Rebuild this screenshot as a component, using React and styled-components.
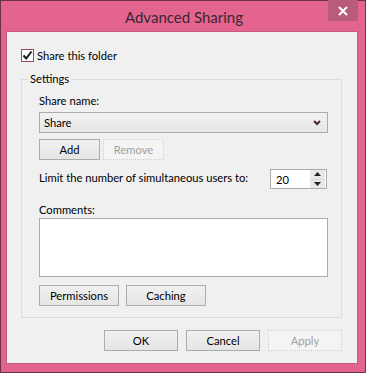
import React from "react";
import styled, { createGlobalStyle } from "styled-components";

const Global = createGlobalStyle`
  html, body { margin: 0; padding: 0; background: #fff; }
  body { font-family: Lato, "Noto Sans", sans-serif; }
  * { box-sizing: border-box; }
`;

const Frame = styled.div`
  width: 366px;
  height: 373px;
  background: #e3658f;
  border: 1px solid #6b3148;
  display: flex;
  flex-direction: column;
`;

const TitleBar = styled.div`
  height: 30px;
  display: flex;
  align-items: flex-start;
  position: relative;
`;

const Title = styled.div`
  flex: 1;
  text-align: center;
  font-size: 15px;
  color: #3a2630;
  line-height: 32px;
  padding-left: 2px;
`;

const Close = styled.div`
  position: absolute;
  right: 7px;
  top: -1px;
  width: 30px;
  height: 21px;
  background: #b85c79;
  display: flex;
  align-items: center;
  justify-content: center;
`;

const Client = styled.div`
  margin: 0 7px 0 5px;
  height: 333px;
  background: #f0f0f0;
  border: 1px solid #c75a80;
  padding: 16px 15px 0 14px;
  display: flex;
  flex-direction: column;
  font-size: 11.2px;
  color: #000;
  white-space: nowrap;
`;

const CheckRow = styled.label`
  display: flex;
  align-items: center;
  gap: 3px;
  height: 14px;
`;

const Box = styled.span`
  width: 13px;
  height: 13px;
  border: 1px solid #9b4866;
  background: #fff;
  display: flex;
  align-items: center;
  justify-content: center;
`;

const Group = styled.div`
  position: relative;
  margin-top: 17px;
  width: 321px;
  height: 239px;
  border: 1px solid #dcdcdc;
  padding: 13px 14px 0 17px;
  display: flex;
  flex-direction: column;
`;

const Legend = styled.span`
  position: absolute;
  top: -9px;
  left: 6px;
  padding: 0 2px;
  background: #f0f0f0;
  line-height: 16px;
`;

const Label = styled.div`
  line-height: 16px;
  height: 16px;
  margin-top: ${(p) => p.$mt || 0}px;
`;

const Select = styled.div`
  margin-top: 3px;
  height: 21px;
  width: 289px;
  border: 1px solid #acacac;
  background: linear-gradient(#f2f2f2, #e6e6e6);
  display: flex;
  align-items: center;
  padding: 0 6px 0 4px;
  justify-content: space-between;
`;

const Row = styled.div`
  display: flex;
  align-items: center;
  gap: ${(p) => p.$gap || 0}px;
  margin-top: ${(p) => p.$mt || 0}px;
  justify-content: ${(p) => p.$justify || "flex-start"};
`;

const RowText = styled.span`
  margin-bottom: 3px;
`;

const Button = styled.div`
  width: ${(p) => p.$w || 61}px;
  height: 21px;
  border: 1px ${(p) => (p.$disabled ? "dotted #cfcfcf" : "solid #acacac")};
  background: ${(p) => (p.$disabled ? "#f4f4f4" : "linear-gradient(#f0f0f0, #e5e5e5)")};
  color: ${(p) => (p.$disabled ? "#a0a0a0" : "#000")};
  display: flex;
  align-items: center;
  justify-content: center;
`;

const Spin = styled.div`
  width: 57px;
  height: 20px;
  border: 1px solid #acacac;
  background: #fff;
  display: flex;
  align-items: center;
  padding-left: 5px;
  justify-content: space-between;
`;

const SpinBtns = styled.div`
  width: 15px;
  height: 18px;
  display: flex;
  flex-direction: column;
  gap: 1px;
  margin-right: 1px;
  background: #d6d6d6;
`;

const SpinBtn = styled.div`
  flex: 1;
  background: #e8e8e8;
  display: flex;
  align-items: center;
  justify-content: center;
`;

const TextArea = styled.div`
  width: 289px;
  height: 59px;
  border: 1px solid #acacac;
  background: #fff;
`;

const Footer = styled(Row)`
  width: 321px;
  justify-content: flex-end;
`;

export default function App() {
  return (
    <>
      <Global />
      <Frame>
        <TitleBar>
          <Title>Advanced Sharing</Title>
          <Close>
            <svg width="10" height="10" viewBox="0 0 10 10">
              <path d="M1 1L9 9M9 1L1 9" stroke="#fff" strokeWidth="2" />
            </svg>
          </Close>
        </TitleBar>
        <Client>
          <CheckRow>
            <Box>
              <svg width="11" height="11" viewBox="0 0 11 11">
                <path d="M1.5 5.5L4.2 8.5L9.5 1.5" stroke="#1a1a1a" strokeWidth="2" fill="none" />
              </svg>
            </Box>
            Share this folder
          </CheckRow>
          <Group>
            <Legend>Settings</Legend>
            <Label>Share name:</Label>
            <Select>
              <span>Share</span>
              <svg width="8" height="6" viewBox="0 0 8 6">
                <path d="M1 1L4 4L7 1" stroke="#4a2838" strokeWidth="2" fill="none" />
              </svg>
            </Select>
            <Row $mt={6} $gap={3}>
              <Button $w={61}>Add</Button>
              <Button $w={61} $disabled>Remove</Button>
            </Row>
            <Row $mt={9} $justify="space-between">
              <RowText>Limit the number of simultaneous users to:</RowText>
              <Spin>
                <span>20</span>
                <SpinBtns>
                  <SpinBtn>
                    <svg width="7" height="4" viewBox="0 0 7 4"><path d="M0 4L3.5 0L7 4Z" fill="#222" /></svg>
                  </SpinBtn>
                  <SpinBtn>
                    <svg width="7" height="4" viewBox="0 0 7 4"><path d="M0 0L3.5 4L7 0Z" fill="#222" /></svg>
                  </SpinBtn>
                </SpinBtns>
              </Spin>
            </Row>
            <Label $mt={13}>Comments:</Label>
            <TextArea />
            <Row $mt={8} $gap={7}>
              <Button $w={80}>Permissions</Button>
              <Button $w={80}>Caching</Button>
            </Row>
          </Group>
          <Footer $mt={12} $gap={8}>
            <Button $w={74}>OK</Button>
            <Button $w={74}>Cancel</Button>
            <Button $w={74} $disabled>Apply</Button>
          </Footer>
        </Client>
      </Frame>
    </>
  );
}
